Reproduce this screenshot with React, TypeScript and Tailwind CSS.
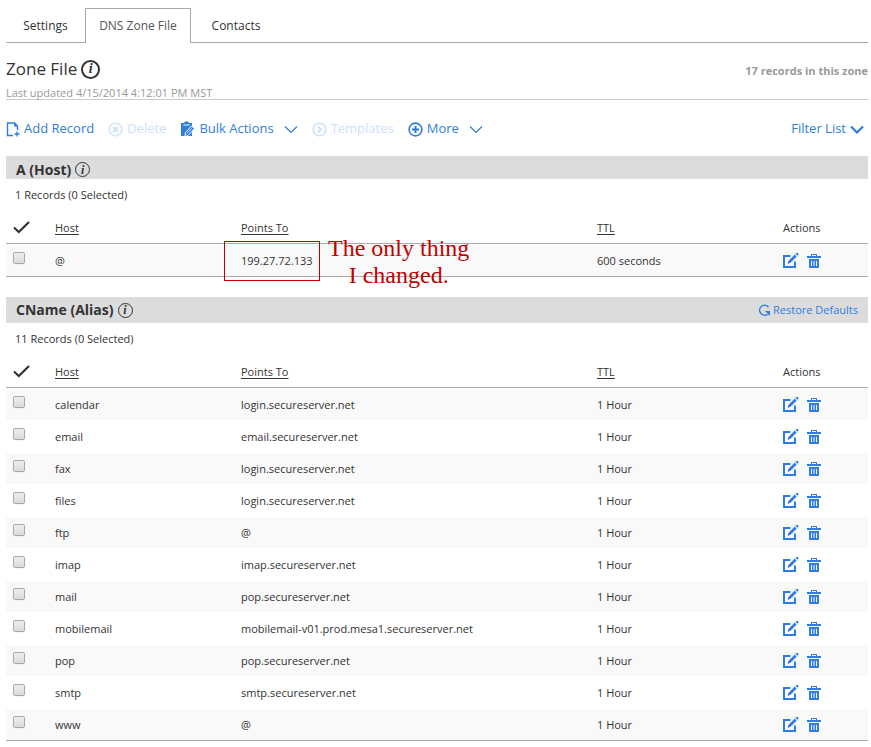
import React, { useState } from 'react';
import clsx from 'clsx';

interface DnsRecord {
  host: string;
  pointsTo: string;
  ttl: string;
}

const aRecords: DnsRecord[] = [{ host: '@', pointsTo: '199.27.72.133', ttl: '600 seconds' }];

const cnameRecords: DnsRecord[] = [
  { host: 'calendar', pointsTo: 'login.secureserver.net', ttl: '1 Hour' },
  { host: 'email', pointsTo: 'email.secureserver.net', ttl: '1 Hour' },
  { host: 'fax', pointsTo: 'login.secureserver.net', ttl: '1 Hour' },
  { host: 'files', pointsTo: 'login.secureserver.net', ttl: '1 Hour' },
  { host: 'ftp', pointsTo: '@', ttl: '1 Hour' },
  { host: 'imap', pointsTo: 'imap.secureserver.net', ttl: '1 Hour' },
  { host: 'mail', pointsTo: 'pop.secureserver.net', ttl: '1 Hour' },
  { host: 'mobilemail', pointsTo: 'mobilemail-v01.prod.mesa1.secureserver.net', ttl: '1 Hour' },
  { host: 'pop', pointsTo: 'pop.secureserver.net', ttl: '1 Hour' },
  { host: 'smtp', pointsTo: 'smtp.secureserver.net', ttl: '1 Hour' },
  { host: 'www', pointsTo: '@', ttl: '1 Hour' },
];

const AddIcon = () => (
  <svg width="14" height="16" viewBox="0 0 14 16" fill="none" stroke="currentColor" aria-hidden="true">
    <path d="M7 14.5H1.5V2H8.5L11.5 5V9" strokeWidth="1.4" />
    <path d="M8 1.5V5.5H12Z" fill="currentColor" stroke="none" />
    <path d="M11 10.5V15.5M8.5 13H13.5" strokeWidth="1.3" />
  </svg>
);

const DeleteIcon = () => (
  <svg width="15" height="15" viewBox="0 0 15 15" fill="none" stroke="currentColor" aria-hidden="true">
    <circle cx="7.5" cy="7.5" r="6.4" strokeWidth="1.3" />
    <path d="M5 5L10 10M10 5L5 10" strokeWidth="1.9" />
  </svg>
);

const BulkIcon = () => (
  <svg width="15" height="16" viewBox="0 0 15 16" aria-hidden="true">
    <path d="M1 2H4L5 0.5H8L9 2H12V15H1Z" fill="currentColor" />
    <path d="M3.5 4H9.5" stroke="white" strokeWidth="1" />
    <path d="M5 15.5L5.5 11.5L11.5 5L14.5 7.5L8.5 14.2Z" fill="currentColor" stroke="white" strokeWidth="1" />
    <path d="M7 12.5L11.8 7.3" stroke="white" strokeWidth="0.8" />
  </svg>
);

const TemplatesIcon = () => (
  <svg width="15" height="15" viewBox="0 0 15 15" fill="none" stroke="currentColor" aria-hidden="true">
    <circle cx="7.5" cy="7.5" r="6.3" strokeWidth="1.5" />
    <path d="M6 4.5L9 7.5L6 10.5" strokeWidth="1.8" />
  </svg>
);

const MoreIcon = () => (
  <svg width="15" height="15" viewBox="0 0 15 15" fill="none" stroke="currentColor" aria-hidden="true">
    <circle cx="7.5" cy="7.5" r="6.4" strokeWidth="1.6" />
    <path d="M7.5 4V11M4 7.5H11" strokeWidth="2" />
  </svg>
);

const ChevronIcon = ({ bold = false }: { bold?: boolean }) => (
  <svg width="14" height="9" viewBox="0 0 14 9" fill="none" stroke="currentColor" aria-hidden="true">
    <path d="M1 1.5L7 7.5L13 1.5" strokeWidth={bold ? 2.2 : 1.2} />
  </svg>
);

const CheckIcon = () => (
  <svg width="17" height="13" viewBox="0 0 17 13" fill="none" stroke="currentColor" aria-hidden="true">
    <path d="M1 6.5L5.8 11L16 1" strokeWidth="2.2" />
  </svg>
);

const RestoreIcon = () => (
  <svg width="13" height="13" viewBox="0 0 13 13" fill="none" stroke="currentColor" aria-hidden="true">
    <path d="M10.5 3A5 5 0 1 0 9.5 10.3" strokeWidth="1.5" />
    <path d="M7 7H12V12Z" fill="currentColor" stroke="none" />
  </svg>
);

const EditIcon = () => (
  <svg width="16" height="16" viewBox="0 0 16 16" fill="none" stroke="currentColor" aria-hidden="true">
    <path d="M7.5 4H1V15H12V9.5" strokeWidth="2" />
    <path d="M4.5 12L5.5 8.8L11.8 2.5L13.7 4.4L7.6 10.8Z" fill="currentColor" stroke="none" />
    <path d="M12.5 1.8L13.9 0.4L15.8 2.3L14.4 3.7Z" fill="currentColor" stroke="none" />
  </svg>
);

const TrashIcon = () => (
  <svg width="14" height="14" viewBox="0 0 14 14" fill="currentColor" aria-hidden="true">
    <path d="M4 0H10V2H14V4H0V2H4ZM5 1V2H9V1Z" fillRule="evenodd" />
    <path d="M2 5H12V14H2ZM4 7V12H5V7ZM6.5 7V12H7.5V7ZM9 7V12H10V7Z" fillRule="evenodd" />
  </svg>
);

const InfoButton = ({ label, large = false }: { label: string; large?: boolean }) => (
  <button
    type="button"
    aria-label={label}
    className={clsx(
      'flex items-center justify-center rounded-full border-[#333] font-["Liberation_Serif",serif] font-bold italic text-[#333]',
      large ? 'size-[19px] border-2 text-sm leading-none' : 'size-[15px] border text-xs leading-none'
    )}
  >
    i
  </button>
);

interface RecordSectionProps {
  title: string;
  records: DnsRecord[];
  action?: React.ReactNode;
  note?: React.ReactNode;
}

const RecordSection: React.FC<RecordSectionProps> = ({ title, records, action, note }) => {
  const [selected, setSelected] = useState<string[]>([]);

  const toggle = (host: string) => {
    setSelected((prev) => (prev.includes(host) ? prev.filter((h) => h !== host) : [...prev, host]));
  };

  return (
    <section>
      <div className={clsx('flex items-center justify-between bg-[#dcdcdc] px-2.5', action ? 'h-[26px]' : 'h-[23px] pt-1')}>
        <div className="flex items-center gap-1">
          <h2 className="text-sm font-bold">{title}</h2>
          <InfoButton label={`About ${title}`} />
        </div>
        {action}
      </div>
      <p className="px-[9px] pt-2 text-[11px] leading-4">
        {records.length} Records ({selected.length} Selected)
      </p>
      <table className="mt-2 w-full table-fixed border-separate border-spacing-0 border-b border-[#aaa] text-left text-[11px] leading-4">
        <thead>
          <tr className="h-[33px]">
            <th className="w-[41px] border-b border-[#aaa] px-[7px]">
              <CheckIcon />
            </th>
            <th className="w-[186px] border-b border-[#aaa] px-2 pt-0.5 font-normal">
              <button type="button" className="underline underline-offset-2">Host</button>
            </th>
            <th className="border-b border-[#aaa] px-2 pt-0.5 font-normal">
              <button type="button" className="underline underline-offset-2">Points To</button>
            </th>
            <th className="w-[186px] border-b border-[#aaa] px-2 pt-0.5 font-normal">
              <button type="button" className="underline underline-offset-2">TTL</button>
            </th>
            <th className="w-[93px] border-b border-[#aaa] px-2 pt-0.5 font-normal">Actions</th>
          </tr>
        </thead>
        <tbody>
          {records.map((record) => (
            <tr key={record.host} className="h-8 odd:bg-[#f9f9f9]">
              <td className="border-t border-white px-[7px] pb-1.5">
                <input
                  type="checkbox"
                  aria-label={`Select ${record.host}`}
                  checked={selected.includes(record.host)}
                  onChange={() => toggle(record.host)}
                  className="block size-3 appearance-none rounded-xs border border-[#a8a8a8] bg-linear-to-b from-[#eee] to-[#dcdcdc] shadow-xs checked:bg-[#2f7de1]"
                />
              </td>
              <td className="border-t border-white px-2">{record.host}</td>
              <td className="relative border-t border-white px-2">
                {record.pointsTo}
                {note}
              </td>
              <td className="border-t border-white px-2">{record.ttl}</td>
              <td className="border-t border-white px-2 pb-0.5">
                <div className="flex items-end gap-2 text-[#2f7de1]">
                  <button type="button" aria-label={`Edit ${record.host}`}>
                    <EditIcon />
                  </button>
                  <button type="button" aria-label={`Delete ${record.host}`}>
                    <TrashIcon />
                  </button>
                </div>
              </td>
            </tr>
          ))}
        </tbody>
      </table>
    </section>
  );
};

const ChangeNote = () => (
  <div className="absolute -top-1 -left-[9px] flex items-start gap-2 text-[#c00000]">
    <div className="h-10 w-24 border border-[#c00000]" />
    <p className="-mt-1.5 text-center font-['Liberation_Serif',serif] text-2xl leading-[27px] whitespace-nowrap">
      The only thing
      <br />I changed.
    </p>
  </div>
);

const tabs = [
  { name: 'Settings', width: 'w-[79px]' },
  { name: 'DNS Zone File', width: 'w-[106px]' },
  { name: 'Contacts', width: 'w-[90px]' },
];

export default function App() {
  const [activeTab, setActiveTab] = useState('DNS Zone File');

  return (
    <main className="bg-white pt-2 pr-[3px] pb-1.5 pl-1.5 font-['Open_Sans','Noto_Sans',sans-serif] text-[#333]">
      <nav className="flex h-[35px] text-xs">
        {tabs.map((tab) => (
          <button
            key={tab.name}
            type="button"
            onClick={() => setActiveTab(tab.name)}
            className={clsx(
              'border-[#aaa] whitespace-nowrap',
              tab.name === activeTab ? 'border border-b-0 text-[#555]' : 'border-b pt-0.5',
              tab.width
            )}
          >
            {tab.name}
          </button>
        ))}
        <div className="flex-1 border-b border-[#aaa]" />
      </nav>

      <header className="flex items-center justify-between border-b border-[#ccc] pt-3">
        <div>
          <div className="flex h-7 items-center gap-1">
            <h1 className="text-[17px] leading-6">Zone File</h1>
            <InfoButton label="About the zone file" large />
          </div>
          <p className="mt-1 text-[11px] leading-3 text-[#999]">Last updated 4/15/2014 4:12:01 PM MST</p>
        </div>
        <p className="pb-3 text-[11px] font-bold text-[#999]">17 records in this zone</p>
      </header>

      <div className="flex h-14 items-center pt-0.5 text-[13px] text-[#2f7de1]">
        <button type="button" className="flex items-center gap-1">
          <AddIcon />
          Add Record
        </button>
        <button type="button" disabled className="ml-3.5 flex items-center gap-1 text-[#cfe1fa]">
          <DeleteIcon />
          Delete
        </button>
        <button type="button" className="ml-3.5 flex items-center gap-1">
          <BulkIcon />
          Bulk Actions
          <span className="ml-1.5">
            <ChevronIcon />
          </span>
        </button>
        <button type="button" disabled className="ml-3.5 flex items-center gap-1 text-[#cfe1fa]">
          <TemplatesIcon />
          Templates
        </button>
        <button type="button" className="ml-3.5 flex items-center gap-1">
          <MoreIcon />
          More
          <span className="ml-1.5">
            <ChevronIcon />
          </span>
        </button>
        <button type="button" className="mr-1 ml-auto flex items-center gap-1">
          Filter List
          <ChevronIcon bold />
        </button>
      </div>

      <div className="flex flex-col gap-5">
        <RecordSection title="A (Host)" records={aRecords} note={<ChangeNote />} />
        <RecordSection
          title="CName (Alias)"
          records={cnameRecords}
          action={
            <button type="button" className="flex items-center gap-0.5 text-[11px] text-[#2f7de1]">
              <RestoreIcon />
              Restore Defaults
            </button>
          }
        />
      </div>
    </main>
  );
}
